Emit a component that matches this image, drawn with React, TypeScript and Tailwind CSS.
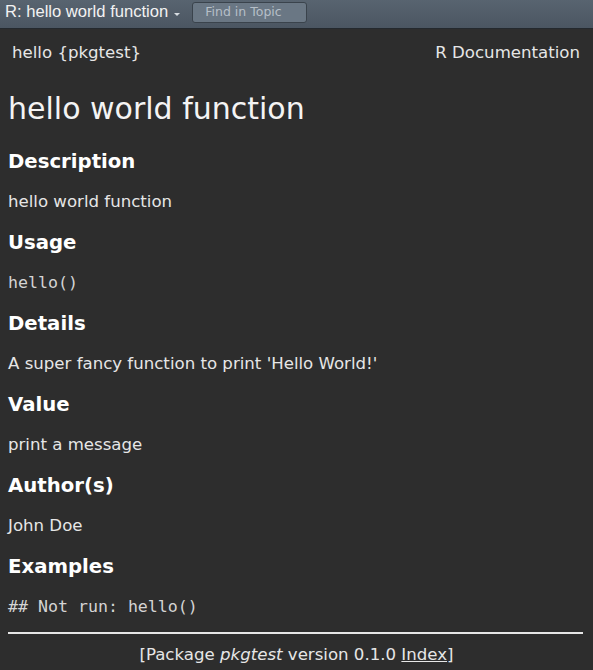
export default function App() {
  const sections: { title: string; body: string; mono?: boolean }[] = [
    { title: "Description", body: "hello world function" },
    { title: "Usage", body: "hello()", mono: true },
    { title: "Details", body: "A super fancy function to print 'Hello World!'" },
    { title: "Value", body: "print a message" },
    { title: "Author(s)", body: "John Doe" },
    { title: "Examples", body: "## Not run: hello()", mono: true },
  ];

  return (
    <div className="w-[593px] h-[670px] overflow-hidden bg-[#2d2d2d] text-[#e6e6e6] font-['DejaVu_Sans',sans-serif]">
      <div className="h-[29px] flex items-center pl-[5px] border-b border-[#24292e] bg-gradient-to-b from-[#586470] to-[#4b5662]">
        <span className="font-['Liberation_Sans',Arial,sans-serif] text-[16.6px] text-[#f2f2f2] leading-none -mt-[3px]">
          R: hello world function
        </span>
        <span className="ml-[6px] mt-[1px] w-0 h-0 border-l-[3px] border-r-[3px] border-t-[3px] border-l-transparent border-r-transparent border-t-[#d8dde2]" />
        <div className="ml-[12px] -mt-[3px] w-[115px] h-[21px] rounded-[3px] border border-[#3a434c] bg-[#6a7784] flex items-center pl-[12px] text-[12.5px] text-[#b6bfc8]">
          Find in Topic
        </div>
      </div>

      <div className="px-[8px]">
        <div className="flex justify-between items-center h-[46px] px-[4px] pt-[2px] text-[16.6px]">
          <span>hello {"{"}pkgtest{"}"}</span>
          <span className="pr-[1px]">R Documentation</span>
        </div>

        <h2 className="text-[30px] leading-none text-[#f4f4f4] mt-[19px] mb-[23px]">hello world function</h2>

        {sections.map((s) => (
          <div key={s.title}>
            <h3 className="text-[19.7px] font-bold text-white leading-none h-[41px] pt-[5px]">{s.title}</h3>
            <div
              className={
                s.mono
                  ? "font-['DejaVu_Sans_Mono',monospace] text-[16.6px] text-[#d4d4d4] leading-none h-[40px] pt-[6px]"
                  : "text-[16.6px] leading-none h-[40px] pt-[6px]"
              }
            >
              {s.body}
            </div>
          </div>
        ))}

        <div className="border-t-2 border-[#e6e6e6] mt-[-1px] mr-[2px]" />
        <div className="text-center text-[16.6px] pt-[9px]">
          [Package <i>pkgtest</i> version 0.1.0 <span className="underline">Index</span>]
        </div>
      </div>
    </div>
  );
}
